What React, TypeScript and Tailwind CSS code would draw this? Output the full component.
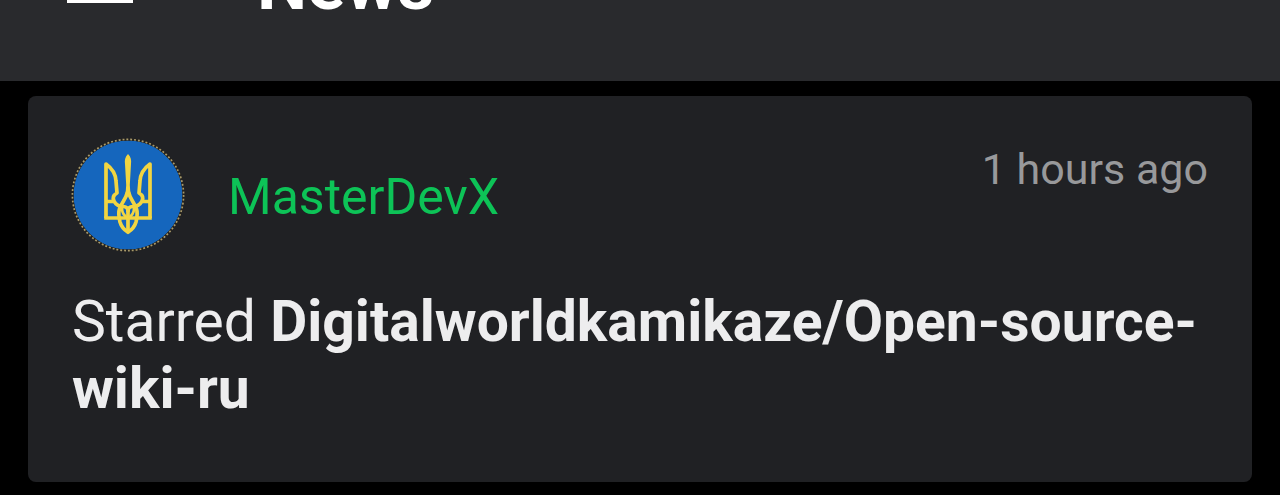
import React from 'react';

interface NewsEvent {
  user: string;
  time: string;
  action: string;
  repo: string;
}

const events: NewsEvent[] = [
  {
    user: 'MasterDevX',
    time: '1 hours ago',
    action: 'Starred',
    repo: 'Digitalworldkamikaze/Open-source-wiki-ru',
  },
];

function Avatar() {
  return (
    <svg viewBox="0 0 112 112" className="w-28 h-28 shrink-0 overflow-visible" role="img" aria-label="Avatar">
      <circle cx="56" cy="56" r="54.6" fill="#1566bd" />
      <circle cx="56" cy="56" r="55.4" fill="none" stroke="#25221c" strokeWidth="2" />
      <circle
        cx="56"
        cy="56"
        r="55.6"
        fill="none"
        stroke="#a89a6c"
        strokeWidth="1.7"
        strokeDasharray="1.9 1.98"
      />
      {/* Trident */}
      <path d="M56 15C53 18 52.5 21 53 25L54.2 46L53.5 56H58.5L57.8 46L59 25C59.5 21 59 18 56 15Z" fill="#f2d541" />
      <g fill="none" stroke="#f2d541" strokeWidth="3.7" strokeLinejoin="round">
        <path d="M34 79V25C41 30 43.6 35 44 42L45 54C41.5 56 40.5 59 42 62C44 66 47 67.5 51 67.5C54.5 67.5 56 69 56 73V92" />
        <path d="M78 79V25C71 30 68.4 35 68 42L67 54C70.5 56 71.5 59 70 62C68 66 65 67.5 61 67.5C57.5 67.5 56 69 56 73" />
        <path d="M33 62.5H42M79 62.5H70" />
        <path d="M55.5 53C54 60 50 63 47.6 69.5C46 74 47 79 48 83C49.4 88 52.5 91 56 93.3C59.5 91 62.6 88 64 83C65 79 66 74 64.4 69.5C62 63 58 60 56.5 53" />
        <path d="M32.2 79H79.8" />
        <path d="M50 69C50 74 52 77 56 79C60 77 62 74 62 69" strokeWidth="2.6" />
      </g>
    </svg>
  );
}

function EventCard({ event }: { event: NewsEvent }) {
  return (
    <article className="rounded-lg bg-[#202124] px-11 pt-[43px] pb-[60px]">
      <div className="flex items-start gap-11">
        <Avatar />
        <a href="#" className="self-center pt-1 text-[50px] leading-[56px] text-[#0dc357]">
          {event.user}
        </a>
        <time className="ml-auto mt-0.5 text-[43px] leading-[56px] text-[#98999b]">{event.time}</time>
      </div>
      <p className="mt-[37px] text-[57px] leading-[67px] text-[#ededee]">
        {event.action} <b className="font-bold">{event.repo}</b>
      </p>
    </article>
  );
}

export default function App() {
  return (
    <div className="min-h-screen bg-black font-['Roboto',sans-serif]">
      {/* Top bar, scrolled partly off the page */}
      <header className="flex h-[81px] items-end gap-[124px] overflow-hidden bg-[#292a2d] px-[67px]">
        <button aria-label="Open menu" className="mb-[78px] flex shrink-0 flex-col gap-3">
          <span className="h-[7px] w-[66px] bg-white" />
          <span className="h-[7px] w-[66px] bg-white" />
          <span className="h-[7px] w-[66px] bg-white" />
        </button>
        <h1 className="mb-[58px] shrink-0 text-[71px] leading-[76px] font-bold text-white">News</h1>
      </header>

      <main className="flex flex-col gap-4 px-7 py-[15px]">
        {events.map((event) => (
          <EventCard key={event.repo} event={event} />
        ))}
      </main>
    </div>
  );
}
